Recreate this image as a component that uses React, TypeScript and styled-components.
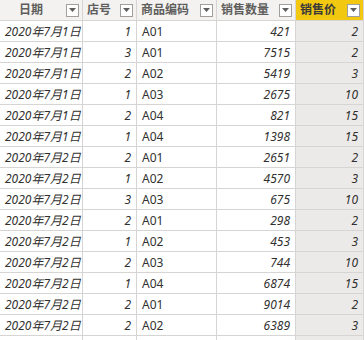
import React from 'react';
import styled, { createGlobalStyle } from 'styled-components';

const GlobalStyle = createGlobalStyle`
  html, body {
    margin: 0;
    padding: 0;
    background: #ffffff;
    font-family: "Noto Sans", "Noto Sans CJK SC", sans-serif;
  }
`;

interface IColumn {
  title: string
  align: 'left' | 'right'
  italic: boolean
  indent: number
  highlight?: boolean
}

const columns: IColumn[] = [
  { title: '日期', align: 'left', italic: true, indent: 19 },
  { title: '店号', align: 'right', italic: true, indent: 4 },
  { title: '商品编码', align: 'left', italic: false, indent: 4 },
  { title: '销售数量', align: 'right', italic: true, indent: 4 },
  { title: '销售价', align: 'right', italic: true, indent: 4, highlight: true },
];

const rows: (string | number)[][] = [
  ['2020年7月1日', 1, 'A01', 421, 2],
  ['2020年7月1日', 3, 'A01', 7515, 2],
  ['2020年7月1日', 2, 'A02', 5419, 3],
  ['2020年7月1日', 1, 'A03', 2675, 10],
  ['2020年7月1日', 2, 'A04', 821, 15],
  ['2020年7月1日', 1, 'A04', 1398, 15],
  ['2020年7月2日', 2, 'A01', 2651, 2],
  ['2020年7月2日', 1, 'A02', 4570, 3],
  ['2020年7月2日', 3, 'A03', 675, 10],
  ['2020年7月2日', 2, 'A01', 298, 2],
  ['2020年7月2日', 1, 'A02', 453, 3],
  ['2020年7月2日', 2, 'A03', 744, 10],
  ['2020年7月2日', 1, 'A04', 6874, 15],
  ['2020年7月2日', 2, 'A01', 9014, 2],
  ['2020年7月2日', 2, 'A02', 6389, 3],
  ['', '', '', '', ''],
];

const FilterButton = () => (
  <StyledFilter>
    <svg width="7" height="4" viewBox="0 0 7 4">
      <path d="M0 0 L7 0 L3.5 4 Z" fill="#605e5c" />
    </svg>
  </StyledFilter>
);

const App = () => {
  return (
    <>
      <GlobalStyle />
      <StyledGrid>
        {columns.map((col) => (
          <StyledHeadCell key={col.title} $highlight={!!col.highlight} $indent={col.indent}>
            <span>{col.title}</span>
            <FilterButton />
          </StyledHeadCell>
        ))}
        {rows.map((row, r) =>
          row.map((value, c) => (
            <StyledCell
              key={`${r}-${c}`}
              $align={columns[c].align}
              $italic={columns[c].italic}
              $shaded={!!columns[c].highlight}
            >
              {value}
            </StyledCell>
          ))
        )}
      </StyledGrid>
    </>
  );
};

export default App;

const StyledGrid = styled.div`
  display: grid;
  grid-template-columns: 83px 54px 80px 79px 68px;
  grid-auto-rows: 21px;
  width: 364px;
  height: 340px;
  overflow: hidden;
`;

const StyledHeadCell = styled.div<{ $highlight: boolean, $indent: number }>`
  display: flex;
  align-items: center;
  justify-content: space-between;
  box-sizing: border-box;
  padding: 0 3px 0 ${(p) => p.$indent}px;
  border-right: 1px solid #d6d5d4;
  border-bottom: 1px solid #d6d5d4;
  background: ${(p) => (p.$highlight ? '#f2c811' : '#f3f2f1')};
  color: ${(p) => (p.$highlight ? '#3b3a39' : '#605e5c')};
  font-size: 12px;
  font-weight: 600;
  line-height: 20px;
  white-space: nowrap;
`;

const StyledFilter = styled.div`
  display: flex;
  align-items: center;
  justify-content: center;
  box-sizing: border-box;
  width: 13px;
  height: 13px;
  border: 1px solid #a19f9d;
  background: #ffffff;
`;

const StyledCell = styled.div<{ $align: string, $italic: boolean, $shaded: boolean }>`
  display: flex;
  align-items: center;
  justify-content: ${(p) => (p.$align === 'right' ? 'flex-end' : 'flex-start')};
  box-sizing: border-box;
  padding: 0 5px 0 5px;
  border-right: 1px solid #d6d5d4;
  border-bottom: 1px solid #d6d5d4;
  background: ${(p) => (p.$shaded ? '#ebeae9' : '#ffffff')};
  color: #323130;
  font-size: 12px;
  font-style: ${(p) => (p.$italic ? 'italic' : 'normal')};
  white-space: nowrap;
`;
